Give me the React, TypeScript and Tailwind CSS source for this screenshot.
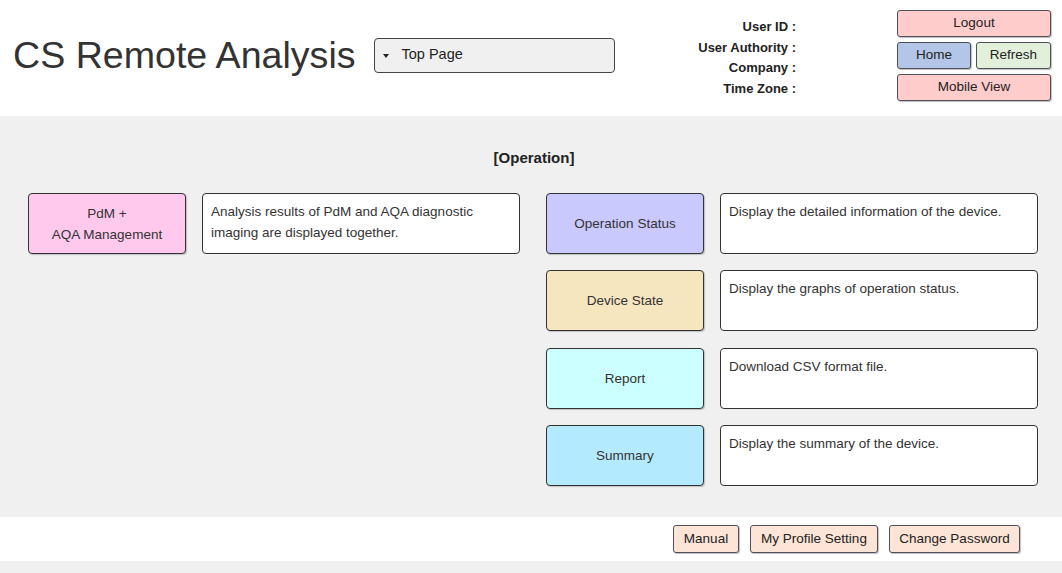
const font = { fontFamily: '"Liberation Sans", Arial, sans-serif' };

const rightRows = [
  { label: 'Operation Status', bg: 'bg-[#c9c9fd]', desc: 'Display the detailed information of the device.' },
  { label: 'Device State', bg: 'bg-[#f6e6c0]', desc: 'Display the graphs of operation status.' },
  { label: 'Report', bg: 'bg-[#ccffff]', desc: 'Download CSV format file.' },
  { label: 'Summary', bg: 'bg-[#b3eafd]', desc: 'Display the summary of the device.' },
];

const btn =
  'border border-[#4f4f5c] rounded-[3px] shadow-[1px_1px_1px_rgba(0,0,0,0.25)] text-[13.5px] text-[#222] flex items-center justify-center';

function Card({ label, bg, desc }: { label: React.ReactNode; bg: string; desc: string }) {
  return (
    <div className="flex gap-[16px] h-[61px]">
      <div
        className={`w-[158px] shrink-0 ${bg} border border-[#333] rounded-[4px] shadow-[1px_1px_1px_rgba(0,0,0,0.2)] flex items-center justify-center text-center text-[13.5px] leading-[21px] text-[#333]`}
      >
        {label}
      </div>
      <div className="flex-1 bg-white border border-[#333] rounded-[4px] px-[8px] pt-[7px] text-[13.5px] leading-[21px] text-[#333]">
        {desc}
      </div>
    </div>
  );
}

export default function App() {
  return (
    <div style={font} className="w-[1062px] h-[573px] bg-[#f0f0f0] overflow-hidden">
      {/* Header */}
      <header className="h-[116px] bg-white flex">
        <div className="flex items-center pl-[13px] pt-[37px] self-start">
          <h1 className="text-[37.6px] leading-[36px] h-[36px] text-[#333] font-normal">CS Remote Analysis</h1>
          <div className="ml-[18px] w-[241px] h-[35px] bg-[#f0f0f0] border border-[#444] rounded-[4px] flex items-center pl-[8px]">
            <span className="w-0 h-0 border-l-[3px] border-r-[3px] border-t-[4px] border-l-transparent border-r-transparent border-t-[#222] mt-[1px]" />
            <span className="ml-[13px] text-[14.5px] text-[#222]">Top Page</span>
          </div>
        </div>

        <div className="ml-auto flex">
          <div className="pt-[17px] text-right text-[13px] font-bold leading-[20.5px] text-[#222] mr-[101px]">
            <div>User ID :</div>
            <div>User Authority :</div>
            <div>Company :</div>
            <div>Time Zone :</div>
          </div>
          <div className="pt-[10px] pr-[11px] w-[165px] flex flex-col gap-[5px]">
            <div className={`${btn} h-[27px] bg-[#ffcccc]`}>Logout</div>
            <div className="flex gap-[5px]">
              <div className={`${btn} h-[27px] w-[74px] bg-[#b4c6e7]`}>Home</div>
              <div className={`${btn} h-[27px] flex-1 bg-[#e2efda]`}>Refresh</div>
            </div>
            <div className={`${btn} h-[27px] bg-[#ffcccc]`}>Mobile View</div>
          </div>
        </div>
      </header>

      {/* Main */}
      <main className="h-[401px] bg-[#f0f0f0] pt-[33px] pl-[28px] pr-[24px]">
        <div className="text-center text-[15px] font-bold leading-[18px] text-[#222] pl-[2px]">[Operation]</div>
        <div className="mt-[26px] grid grid-cols-2 gap-x-[26px]">
          <div>
            <Card
              label={
                <span>
                  PdM +
                  <br />
                  AQA Management
                </span>
              }
              bg="bg-[#ffc9ed]"
              desc="Analysis results of PdM and AQA diagnostic imaging are displayed together."
            />
          </div>
          <div className="flex flex-col gap-[16.4px]">
            {rightRows.map((r) => (
              <Card key={r.label} label={r.label} bg={r.bg} desc={r.desc} />
            ))}
          </div>
        </div>
      </main>

      {/* Footer */}
      <footer className="h-[44px] bg-white flex items-center justify-end gap-[11px] pr-[42px]">
        <div className={`${btn} h-[28px] w-[66px] bg-[#fce4d6]`}>Manual</div>
        <div className={`${btn} h-[28px] w-[128px] bg-[#fce4d6]`}>My Profile Setting</div>
        <div className={`${btn} h-[28px] w-[131px] bg-[#fce4d6]`}>Change Password</div>
      </footer>
    </div>
  );
}
